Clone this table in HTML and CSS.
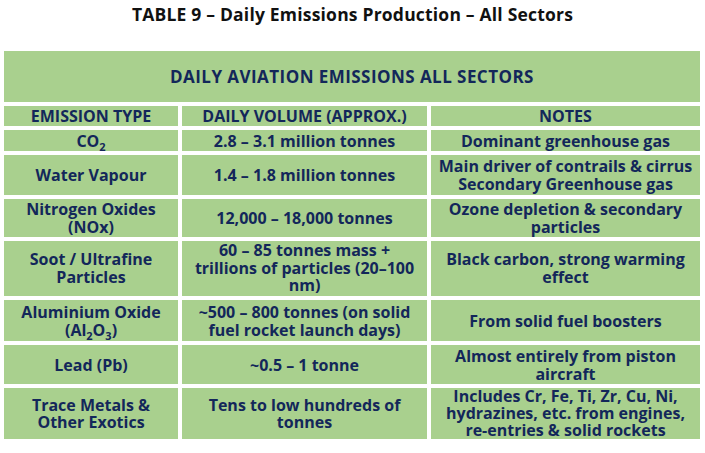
FILE: index.html
```html
<!DOCTYPE html>
<html lang="en">
<head>
<meta charset="utf-8">
<title>Table 9</title>
<link rel="stylesheet" href="styles.css">
</head>
<body>
<h1 class="title">TABLE 9 – Daily Emissions Production – All Sectors</h1>
<table class="emissions">
  <colgroup>
    <col class="c1">
    <col class="c2">
    <col class="c3">
  </colgroup>
  <tr class="r-top"><th colspan="3">DAILY AVIATION EMISSIONS ALL SECTORS</th></tr>
  <tr class="r-head"><th>EMISSION TYPE</th><th>DAILY VOLUME (APPROX.)</th><th>NOTES</th></tr>
  <tr class="r-co2"><td>CO<sub>2</sub></td><td>2.8 – 3.1 million tonnes</td><td>Dominant greenhouse gas</td></tr>
  <tr class="r-water"><td>Water Vapour</td><td>1.4 – 1.8 million tonnes</td><td>Main driver of contrails &amp; cirrus<br>Secondary Greenhouse gas</td></tr>
  <tr class="r-nox"><td>Nitrogen Oxides<br>(NOx)</td><td>12,000 – 18,000 tonnes</td><td>Ozone depletion &amp; secondary<br>particles</td></tr>
  <tr class="r-soot"><td>Soot / Ultrafine<br>Particles</td><td>60 – 85 tonnes mass +<br>trillions of particles (20–100<br>nm)</td><td>Black carbon, strong warming<br>effect</td></tr>
  <tr class="r-al"><td>Aluminium Oxide<br>(Al<sub>2</sub>O<sub>3</sub>)</td><td>~500 – 800 tonnes (on solid<br>fuel rocket launch days)</td><td>From solid fuel boosters</td></tr>
  <tr class="r-lead"><td>Lead (Pb)</td><td>~0.5 – 1 tonne</td><td>Almost entirely from piston<br>aircraft</td></tr>
  <tr class="r-trace"><td>Trace Metals &amp;<br>Other Exotics</td><td>Tens to low hundreds of<br>tonnes</td><td>Includes Cr, Fe, Ti, Zr, Cu, Ni,<br>hydrazines, etc. from engines,<br>re-entries &amp; solid rockets</td></tr>
</table>
</body>
</html>
```
FILE: styles.css
```css
html, body {
  margin: 0;
  padding: 0;
  background: #ffffff;
}
body {
  font-family: "Open Sans", Lato, "Liberation Sans", sans-serif;
  width: 705px;
}
.title {
  margin: 0;
  padding-top: 3px;
  height: 48px;
  box-sizing: border-box;
  text-align: center;
  font-size: 17.5px;
  line-height: 22px;
  letter-spacing: 0.2px;
  font-weight: 700;
  color: #111111;
}
.emissions {
  width: 704px;
  margin-top: -1px;
  table-layout: fixed;
  border-collapse: separate;
  border-spacing: 4px;
  color: #13275a;
  font-size: 16px;
  line-height: 18px;
  font-weight: 700;
}
.c1 { width: 174px; }
.c2 { width: 245px; }
.c3 { width: 269px; }
.emissions th,
.emissions td {
  background: #a9d08e;
  text-align: center;
  vertical-align: middle;
  padding: 1px 1px;
  font-weight: 700;
}
.r-top th {
  height: 49px;
  font-size: 17px;
  letter-spacing: 0.45px;
}
.r-head th { height: 18px; }
.r-co2 td { height: 19px; }
.r-water td { height: 38px; }
.r-nox td { height: 36px; }
.r-soot td { height: 53px; line-height: 17.5px; }
.r-al td { height: 39px; }
.r-lead td { height: 37px; }
.r-trace td { height: 51px; padding-top: 0; padding-bottom: 0; line-height: 17px; }
.emissions sub {
  font-size: 11px;
  line-height: 0;
  vertical-align: -4px;
}
```
